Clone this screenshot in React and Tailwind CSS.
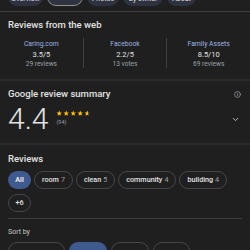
import { ChevronDown, Info } from "lucide-react";

const tabs = [
  { label: "Overview", w: "w-[35px]" },
  { label: "Reviews", w: "w-[36px]", active: true },
  { label: "Photos", w: "w-[32px]" },
  { label: "By owner", w: "w-[40px]" },
  { label: "About", w: "w-[29px]" },
];

const sources = [
  { name: "Caring.com", score: "3.5/5", count: "29 reviews" },
  { name: "Facebook", score: "2.2/5", count: "13 votes" },
  { name: "Family Assets", score: "8.5/10", count: "69 reviews" },
];

const topics = [
  { label: "room", n: 7 },
  { label: "clean", n: 5 },
  { label: "community", n: 4 },
  { label: "building", n: 4 },
];

const Star = ({ half }) => (
  <svg viewBox="0 0 24 24" className="w-[6.5px] h-[6.5px]">
    <defs>
      <linearGradient id="halfstar">
        <stop offset="55%" stopColor="#fbbc04" />
        <stop offset="55%" stopColor="#5f6368" />
      </linearGradient>
    </defs>
    <path
      d="M12 2l2.9 6.9 7.1.6-5.4 4.7 1.6 7-6.2-3.8-6.2 3.8 1.6-7L2 9.5l7.1-.6z"
      fill={half ? "url(#halfstar)" : "#fbbc04"}
    />
  </svg>
);

export default function App() {
  return (
    <div
      className="w-[250px] h-[250px] overflow-hidden bg-[#1f1f1f] text-[#e3e3e3]"
      style={{ fontFamily: "Roboto, 'Open Sans', sans-serif" }}
    >
      {/* tab chips, mostly scrolled out */}
      <div className="border-b border-[#3c4043] pb-[5px]">
        <div className="flex gap-[4px] px-[8px] -mt-[12px]">
          {tabs.map((t) => (
            <div
              key={t.label}
              className={`${t.w} h-[18px] rounded-full flex items-end justify-center pb-[2px] text-[7px] ${
                t.active ? "bg-[#2f3340] border border-[#8e918f]" : "bg-[#2e3140]"
              }`}
            >
              {t.label}
            </div>
          ))}
        </div>
      </div>

      {/* Reviews from the web */}
      <div className="pt-[7px] pb-[11px]">
        <h2 className="px-[8px] text-[9.5px] leading-[12px] font-medium">Reviews from the web</h2>
        <div className="mt-[7px] flex">
          {sources.map((s, i) => (
            <div
              key={s.name}
              className={`flex-1 flex flex-col items-center h-[30px] ${
                i > 0 ? "border-l border-[#3c4043]" : ""
              }`}
            >
              <span className="text-[6.8px] leading-[10px] text-[#9db5e4] mt-[1px]">{s.name}</span>
              <span className="text-[7.5px] leading-[11px] text-[#e3e3e3]">{s.score}</span>
              <span className="text-[6.6px] leading-[9px] text-[#9aa0a6]">{s.count}</span>
            </div>
          ))}
        </div>
      </div>

      <div className="h-[2px] bg-[#2c2c2c]" />

      {/* Google review summary */}
      <div className="px-[8px] pt-[7px] pb-[8px]">
        <div className="flex items-center justify-between h-[12px]">
          <h2 className="text-[9.5px] leading-[12px] font-medium">Google review summary</h2>
          <Info className="w-[7px] h-[7px] text-[#9aa0a6] mr-[1px]" strokeWidth={2.5} />
        </div>
        <div className="flex items-center mt-[3px] h-[32px]">
          <span className="text-[30px] leading-[32px] font-light text-[#e3e3e3]">4.4</span>
          <div className="ml-[8px] flex flex-col gap-[2px] -mt-[2px]">
            <div className="flex gap-[0.3px]">
              <Star />
              <Star />
              <Star />
              <Star />
              <Star half />
            </div>
            <span className="text-[5.5px] leading-[7px] text-[#9aa0a6]">(94)</span>
          </div>
          <ChevronDown className="ml-auto w-[9px] h-[9px] text-[#c4c7c5] mr-[2px]" strokeWidth={2.5} />
        </div>
      </div>

      <div className="h-[2px] bg-[#2c2c2c]" />

      {/* Reviews */}
      <div className="px-[8px] pt-[8px]">
        <h2 className="text-[9.5px] leading-[12px] font-medium">Reviews</h2>
        <div className="mt-[6px] flex flex-wrap gap-x-[3px] gap-y-[5px]">
          <div className="h-[18px] w-[23px] rounded-full bg-[#3e5a8e] flex items-center justify-center text-[7.2px] font-medium text-white">
            All
          </div>
          {topics.map((t) => (
            <div
              key={t.label}
              className="h-[18px] px-[7px] rounded-full border border-[#444746] flex items-center text-[7.2px] font-medium"
            >
              {t.label}
              <span className="ml-[2px] font-normal text-[#9aa0a6]">{t.n}</span>
            </div>
          ))}
          <div className="h-[18px] w-[23px] rounded-full border border-[#444746] flex items-center justify-center text-[7.2px] font-medium">
            +6
          </div>
        </div>
        <div className="mt-[6px] border-t border-[#3c4043]" />
        <div className="mt-[9px] text-[7px] leading-[9px] text-[#c4c7c5]">Sort by</div>
        <div className="mt-[5px] flex gap-[4px]">
          <div className="h-[18px] w-[57px] rounded-full border border-[#444746]" />
          <div className="h-[18px] w-[38px] rounded-full bg-[#3e5a8e]" />
          <div className="h-[18px] w-[38px] rounded-full border border-[#444746]" />
          <div className="h-[18px] w-[37px] rounded-full border border-[#444746]" />
        </div>
      </div>
    </div>
  );
}
